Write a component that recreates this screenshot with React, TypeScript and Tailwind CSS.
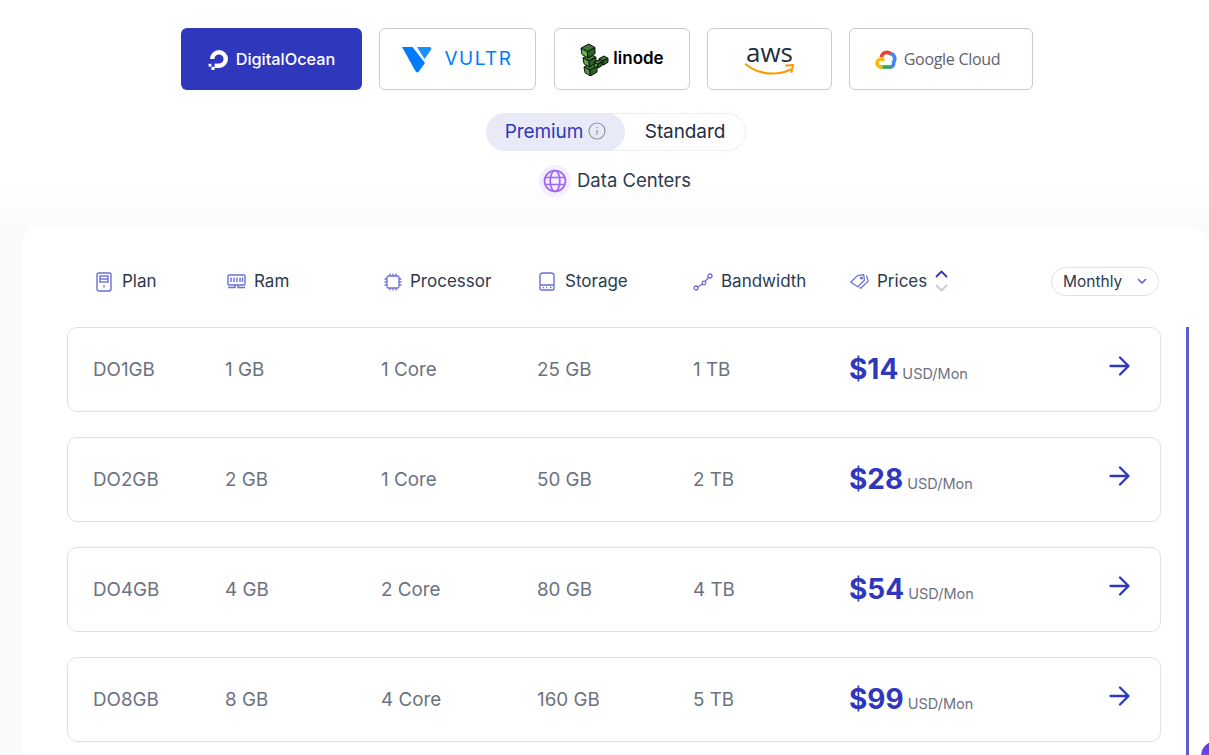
import React from "react";

const font = "font-['Inter','Liberation_Sans',sans-serif]";

function DOLogo() {
  return (
    <svg width="24" height="24" viewBox="0 0 24 24" fill="none">
      <path d="M12 21v-4.4a4.6 4.6 0 1 0-4.6-4.6H3a9 9 0 1 1 9 9Z" fill="#fff" />
      <rect x="7.6" y="16.6" width="4.4" height="4.4" fill="#fff" />
      <rect x="4.4" y="19.8" width="3.2" height="3.2" fill="#fff" />
      <rect x="1.6" y="16.8" width="2.8" height="2.8" fill="#fff" />
    </svg>
  );
}

function VultrLogo() {
  return (
    <svg width="30" height="27" viewBox="0 0 30 27">
      <path d="M0 1h10.5L23 17 16 26.5 14 26Z" fill="#007bfc" />
      <path d="M15 1h13.5l1 2-7 10Z" fill="#1c8fff" />
    </svg>
  );
}

function Cube({ x, y, s, c }: { x: number; y: number; s: number; c: string }) {
  return (
    <g stroke="#0c0f0c" strokeWidth="1" strokeLinejoin="round">
      <path d={`M${x} ${y + s * 0.3}L${x + s * 0.55} ${y}L${x + s} ${y + s * 0.25}L${x + s * 0.45} ${y + s * 0.55}Z`} fill="#3d7a36" />
      <path d={`M${x} ${y + s * 0.3}L${x + s * 0.45} ${y + s * 0.55}L${x + s * 0.5} ${y + s}L${x + s * 0.08} ${y + s * 0.75}Z`} fill={c} />
      <path d={`M${x + s * 0.45} ${y + s * 0.55}L${x + s} ${y + s * 0.25}L${x + s} ${y + s * 0.7}L${x + s * 0.5} ${y + s}Z`} fill="#2f5f2c" />
    </g>
  );
}

function LinodeLogo() {
  return (
    <svg width="29" height="33" viewBox="0 0 29 33">
      <Cube x={4} y={20} s={13} c="#4f9a45" />
      <Cube x={3} y={11} s={13} c="#5fae4d" />
      <Cube x={19} y={13} s={9} c="#5fae4d" />
      <Cube x={14} y={17} s={8} c="#5fae4d" />
      <Cube x={1} y={1} s={14} c="#67b852" />
    </svg>
  );
}

function AwsSmile() {
  return (
    <svg width="50" height="14" viewBox="0 0 50 14" fill="none">
      <path d="M1 1.5C9 8 19 10.5 28 10.5c6 0 12-1.2 18-4" stroke="#f90" strokeWidth="2.2" strokeLinecap="round" />
      <path d="M41 2.5l7-.6-1.5 7" stroke="#f90" strokeWidth="2" strokeLinecap="round" strokeLinejoin="round" />
    </svg>
  );
}

function GoogleCloudLogo() {
  return (
    <svg width="23" height="19" viewBox="0 0 23 19" fill="none">
      <path d="M6.4 7.2a5.6 5.6 0 0 1 10-2.6" stroke="#ea4335" strokeWidth="3.6" />
      <path d="M15.6 3.6a5.4 5.4 0 0 1 3 8.6 4 4 0 0 1-2.6 4.8h-1.6" stroke="#4285f4" strokeWidth="3.6" />
      <path d="M5.5 17h10" stroke="#34a853" strokeWidth="3.6" />
      <path d="M7.6 17H5.8a3.9 3.9 0 1 1 3.2-6.4" stroke="#fbbc05" strokeWidth="3.6" />
    </svg>
  );
}

const stroke = "#6a6fd6";

function PlanIcon() {
  return (
    <svg width="16" height="20" viewBox="0 0 16 20" fill="none" stroke={stroke} strokeWidth="1.4">
      <rect x="1" y="1" width="14" height="18" rx="2" />
      <rect x="4" y="4" width="8" height="6" />
      <path d="M4 7h8" />
      <circle cx="8" cy="14.5" r="1" fill={stroke} stroke="none" />
    </svg>
  );
}
function RamIcon() {
  return (
    <svg width="19" height="15" viewBox="0 0 19 15" fill="none" stroke={stroke} strokeWidth="1.4">
      <rect x="1" y="1" width="17" height="10" rx="1" />
      <path d="M4 3.5v4.5M7 3.5v4.5M10 3.5v4.5M13 3.5v4.5M15.5 3.5v4.5" />
      <path d="M1 13.5h7v-2.5M11 11v2.5h7" />
    </svg>
  );
}
function CpuIcon() {
  return (
    <svg width="18" height="18" viewBox="0 0 18 18" fill="none" stroke={stroke} strokeWidth="1.3">
      <rect x="3" y="3" width="12" height="12" rx="1.5" />
      <path d="M6 0.5V3M9 0.5V3M12 0.5V3M6 15v2.5M9 15v2.5M12 15v2.5M0.5 6H3M0.5 9H3M0.5 12H3M15 6h2.5M15 9h2.5M15 12h2.5" />
    </svg>
  );
}
function StorageIcon() {
  return (
    <svg width="16" height="19" viewBox="0 0 16 19" fill="none" stroke={stroke} strokeWidth="1.4">
      <path d="M1 13V3.5A2.5 2.5 0 0 1 3.5 1h9A2.5 2.5 0 0 1 15 3.5V13" />
      <rect x="1" y="13" width="14" height="5" rx="1.5" />
      <path d="M4 15.5h1M7 15.5h1M11 15.5h1.5" />
    </svg>
  );
}
function BandwidthIcon() {
  return (
    <svg width="20" height="18" viewBox="0 0 20 18" fill="none" stroke={stroke} strokeWidth="1.3">
      <circle cx="3" cy="15" r="2" />
      <circle cx="11" cy="10" r="1.8" />
      <circle cx="17" cy="3" r="2" />
      <path d="M5 14l4.5-3M12 8.5l3.6-4" />
    </svg>
  );
}
function TagIcon() {
  return (
    <svg width="19" height="15" viewBox="0 0 19 15" fill="none" stroke={stroke} strokeWidth="1.25" strokeLinejoin="round">
      <path d="M0.7 8.2 7.5 1.6l6.2-.9.7 5.6-6.6 6.5Z" />
      <path d="M9.4 13.4l1.4.9 7.4-7.2-1.8-5.6" />
      <circle cx="11.4" cy="3.9" r="0.9" />
    </svg>
  );
}
function Sort() {
  return (
    <div className="flex flex-col gap-[6px] ml-[8px] -mt-[1px]">
      <svg width="13" height="8" viewBox="0 0 13 8" fill="none" stroke="#2f38bd" strokeWidth="1.8" strokeLinecap="round" strokeLinejoin="round"><path d="M1.5 6.5 6.5 1.5l5 5" /></svg>
      <svg width="13" height="8" viewBox="0 0 13 8" fill="none" stroke="#c6cbd6" strokeWidth="1.8" strokeLinecap="round" strokeLinejoin="round"><path d="M1.5 1.5l5 5 5-5" /></svg>
    </div>
  );
}

function Arrow() {
  return (
    <svg width="21" height="20" viewBox="0 0 21 20" fill="none" stroke="#2f38bd" strokeWidth="2.3" strokeLinecap="round" strokeLinejoin="round">
      <path d="M1.5 10h18M11 1.5l8.5 8.5-8.5 8.5" />
    </svg>
  );
}

function Provider({ w, active, children }: { w: string; active?: boolean; children: React.ReactNode }) {
  return (
    <div className={`${w} h-[62px] rounded-[6px] flex items-center justify-center ${active ? "bg-[#2f38bd]" : "bg-white border border-[#c5cad6]"}`}>
      {children}
    </div>
  );
}

function Head({ icon, label, w, gap = "w-[26px]" }: { icon: React.ReactNode; label: string; w: string; gap?: string }) {
  return (
    <div className={`${w} flex items-center`}>
      <div className={`${gap} flex justify-start`}>{icon}</div>
      <span className="text-[17px] text-[#2c3a4f]">{label}</span>
    </div>
  );
}

const rows = [
  ["DO1GB", "1 GB", "1 Core", "25 GB", "1 TB", "$14"],
  ["DO2GB", "2 GB", "1 Core", "50 GB", "2 TB", "$28"],
  ["DO4GB", "4 GB", "2 Core", "80 GB", "4 TB", "$54"],
  ["DO8GB", "8 GB", "4 Core", "160 GB", "5 TB", "$99"],
];

export default function App() {
  return (
    <div className={`${font} relative h-[755px] w-[1209px] overflow-hidden bg-[linear-gradient(#ffffff_175px,#fafafa_228px)]`}>
      <div className="flex pt-[28px] pl-[181px]">
        <Provider w="w-[181px]" active>
          <div className="flex items-center gap-[5px] -ml-[1px]">
            <DOLogo />
            <span className="text-[16.3px] font-medium text-white">DigitalOcean</span>
          </div>
        </Provider>
        <div className="ml-[17px]">
          <Provider w="w-[157px]">
            <div className="flex items-center gap-[12px]">
              <VultrLogo />
              <span className="text-[19px] tracking-[1.5px] text-[#007bfc]">VULTR</span>
            </div>
          </Provider>
        </div>
        <div className="ml-[18px]">
          <Provider w="w-[136px]">
            <div className="flex items-center gap-[4px]">
              <LinodeLogo />
              <span className="text-[17px] font-semibold text-black">linode</span>
            </div>
          </Provider>
        </div>
        <div className="ml-[17px]">
          <Provider w="w-[125px]">
            <div className="flex flex-col items-center">
              <span className="text-[26px] leading-[22px] text-[#232f3e] font-['Open_Sans',sans-serif]">aws</span>
              <AwsSmile />
            </div>
          </Provider>
        </div>
        <div className="ml-[17px]">
          <Provider w="w-[184px]">
            <div className="flex items-center gap-[6px] pr-[7px]">
              <GoogleCloudLogo />
              <span className="text-[16px] tracking-[-0.3px] text-[#5f6368] font-['Open_Sans',sans-serif]">Google Cloud</span>
            </div>
          </Provider>
        </div>
      </div>

      <div className="mt-[23px] ml-[486px] w-[260px] h-[38px] rounded-full border border-[#ecedf7] bg-white flex items-center">
        <div className="w-[139px] h-[38px] -ml-px rounded-full bg-[#e8eaf7] flex items-center justify-center gap-[5px] text-[19px] tracking-[-0.1px] text-[#2f38bd]">
          <span>Premium</span>
          <svg width="18" height="18" viewBox="0 0 18 18" fill="none" stroke="#8a90a0" strokeWidth="1.1" className="-mt-[3px]">
            <circle cx="9" cy="9" r="8" />
            <path d="M9 8v5M9 5v1.2" />
          </svg>
        </div>
        <div className="flex-1 text-center text-[19px] tracking-[-0.1px] text-[#1f2d44]">Standard</div>
      </div>
      <div className="mt-[14px] ml-[539px] flex items-center gap-[6px]">
        <div className="w-[32px] h-[32px] rounded-full bg-[#f5eefe] flex items-center justify-center">
          <svg width="24" height="24" viewBox="0 0 24 24" fill="none" stroke="#a066f5" strokeWidth="1.7">
            <circle cx="12" cy="12" r="10.5" />
            <ellipse cx="12" cy="12" rx="4.8" ry="10.5" />
            <path d="M2 8.5h20M2 15.5h20" />
          </svg>
        </div>
        <span className="text-[18.5px] text-[#2c3a4f]">Data Centers</span>
      </div>

      <div className="mt-[30px] ml-[22px] w-[1187px] h-[560px] bg-white rounded-[16px] pl-[45px] pt-[40px]">
        <div className="w-[1094px] flex items-center h-[29px]">
          <div className="pl-[29px] flex items-center">
            <Head w="w-[131px]" icon={<PlanIcon />} label="Plan" />
            <Head w="w-[157px]" gap="w-[27px]" icon={<RamIcon />} label="Ram" />
            <Head w="w-[155px]" icon={<CpuIcon />} label="Processor" />
            <Head w="w-[154px]" icon={<StorageIcon />} label="Storage" />
            <Head w="w-[157px]" gap="w-[28px]" icon={<BandwidthIcon />} label="Bandwidth" />
            <div className="flex items-center">
              <div className="w-[27px]"><TagIcon /></div>
              <span className="text-[17px] text-[#2c3a4f]">Prices</span>
              <Sort />
            </div>
          </div>
          <div className="ml-auto mr-[2px] w-[108px] h-[29px] rounded-full border border-[#dfe1ea] flex items-center justify-between pl-[11px] pr-[11px] text-[15.5px] text-[#2c3a4f]">
            <span>Monthly</span>
            <svg width="10" height="7" viewBox="0 0 10 7" fill="none" stroke="#5a5fd0" strokeWidth="1.6" strokeLinecap="round" strokeLinejoin="round"><path d="M1.5 1.5 5 5l3.5-3.5" /></svg>
          </div>
        </div>

        <div className="mt-[31px] w-[1094px] flex flex-col gap-[25px]">
          {rows.map((r) => (
            <div key={r[0]} className="h-[85px] rounded-[10px] border border-[#e0e1e6] bg-white grid grid-cols-[132px_156px_156px_156px_156px_1fr_auto] items-center pl-[25px] pr-[30px] pt-[2px] text-[18.8px] text-[#6b7280]">
              <div>{r[0]}</div>
              <div>{r[1]}</div>
              <div>{r[2]}</div>
              <div>{r[3]}</div>
              <div>{r[4]}</div>
              <div className="flex items-baseline gap-[4px] -mt-[4px]">
                <span className="text-[28px] font-bold text-[#2f38bd]">{r[5]}</span>
                <span className="text-[14.5px] text-[#6b7280]">USD/Mon</span>
              </div>
              <div className="-mt-[9px]"><Arrow /></div>
            </div>
          ))}
        </div>
      </div>

      <div className="absolute left-[1186px] top-[327px] bottom-0 w-[3px] bg-[#5a5fd6]" />
      <div className="absolute left-[1201px] top-[741px] w-[30px] h-[30px] rounded-full bg-gradient-to-b from-[#5a35d0] to-[#8a60f0]" />
    </div>
  );
}
